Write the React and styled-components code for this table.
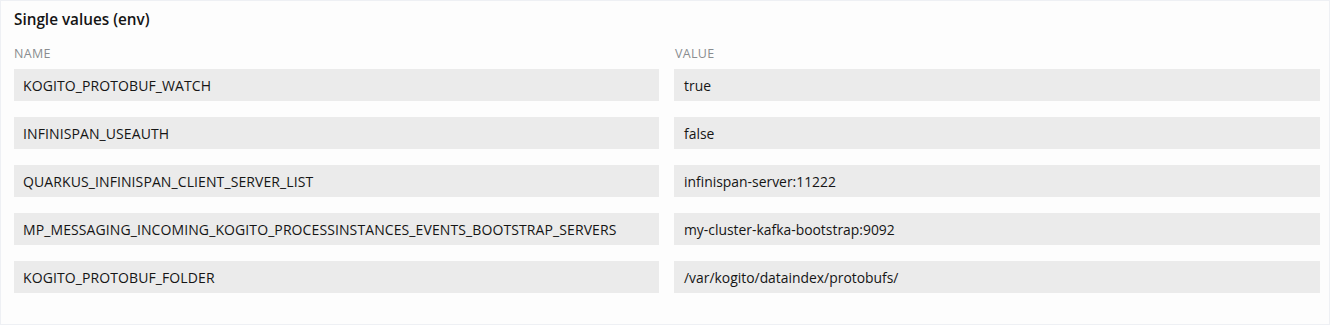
import React from "react";
import styled, { createGlobalStyle } from "styled-components";

const Global = createGlobalStyle`
  html, body { margin: 0; padding: 0; background: #f3f4f7; }
  body { font-family: "Open Sans", "Noto Sans", sans-serif; color: #151515; }
`;

const Card = styled.section`
  box-sizing: border-box;
  width: 1330px;
  height: 325px;
  background: #fdfdfd;
  border: 1px solid #eef0f4;
  padding: 4px 9px 0 13px;
`;

const Title = styled.h2`
  margin: 0;
  font-size: 15.3px;
  font-weight: 600;
  line-height: 28px;
  color: #151515;
`;

const Table = styled.div`
  display: grid;
  grid-template-columns: 645px 646px;
  column-gap: 15px;
  row-gap: 16px;
  margin-top: 13px;
`;

const HeadCell = styled.div`
  font-size: 12.5px;
  letter-spacing: 0.3px;
  text-transform: uppercase;
  color: #8a8d90;
  line-height: 16px;
  margin-bottom: -9px;
  padding-left: ${(p) => (p.$right ? "1px" : "0")};
`;

const Cell = styled.div`
  box-sizing: border-box;
  height: 32px;
  background: #ebebeb;
  display: flex;
  align-items: center;
  padding-left: ${(p) => (p.$value ? "10px" : "9px")};
  font-size: ${(p) => (p.$value ? "13.9px" : "14px")};
  letter-spacing: ${(p) => (p.$value ? "0" : "0.1px")};
  color: #151515;
  white-space: nowrap;
`;

const rows = [
  ["KOGITO_PROTOBUF_WATCH", "true"],
  ["INFINISPAN_USEAUTH", "false"],
  ["QUARKUS_INFINISPAN_CLIENT_SERVER_LIST", "infinispan-server:11222"],
  ["MP_MESSAGING_INCOMING_KOGITO_PROCESSINSTANCES_EVENTS_BOOTSTRAP_SERVERS", "my-cluster-kafka-bootstrap:9092"],
  ["KOGITO_PROTOBUF_FOLDER", "/var/kogito/dataindex/protobufs/"],
];

export default function App() {
  return (
    <>
      <Global />
      <Card>
        <Title>Single values (env)</Title>
        <Table>
          <HeadCell>Name</HeadCell>
          <HeadCell $right>Value</HeadCell>
          {rows.map(([k, v]) => (
            <React.Fragment key={k}>
              <Cell>{k}</Cell>
              <Cell $value>{v}</Cell>
            </React.Fragment>
          ))}
        </Table>
      </Card>
    </>
  );
}
